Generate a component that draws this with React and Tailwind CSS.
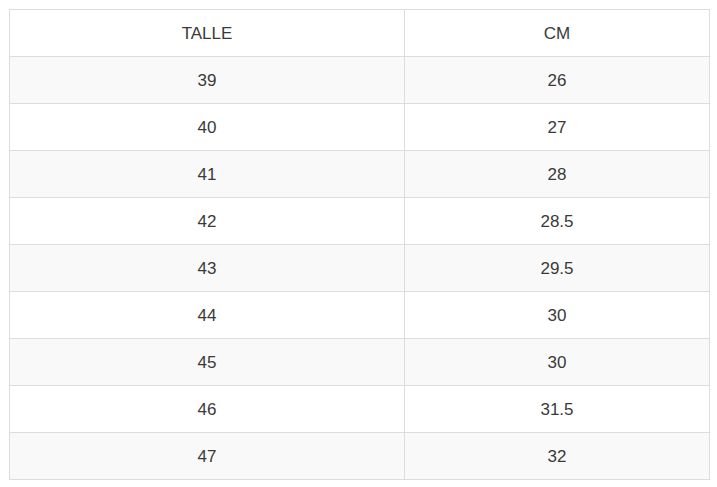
const rows = [
  ['39', '26'],
  ['40', '27'],
  ['41', '28'],
  ['42', '28.5'],
  ['43', '29.5'],
  ['44', '30'],
  ['45', '30'],
  ['46', '31.5'],
  ['47', '32'],
]

export default function App() {
  return (
    <div className="bg-white w-[717px] h-[487px] p-[9px] font-['Liberation_Sans',Arial,sans-serif] text-[#3a3a3a] text-[17px]">
      <table className="w-[700px] border-collapse border border-[#ddd] table-fixed">
        <colgroup>
          <col className="w-[395px]" />
          <col className="w-[305px]" />
        </colgroup>
        <thead>
          <tr className="h-[47px]">
            <th className="border border-[#ddd] font-normal text-center p-0 pt-px">TALLE</th>
            <th className="border border-[#ddd] font-normal text-center p-0 pt-px">CM</th>
          </tr>
        </thead>
        <tbody>
          {rows.map(([talle, cm], i) => (
            <tr key={talle} className={i % 2 === 0 ? 'h-[47px] bg-[#f9f9f9]' : 'h-[47px] bg-white'}>
              <td className="border border-[#ddd] text-center p-0 pt-px">{talle}</td>
              <td className="border border-[#ddd] text-center p-0 pt-px">{cm}</td>
            </tr>
          ))}
        </tbody>
      </table>
    </div>
  )
}
